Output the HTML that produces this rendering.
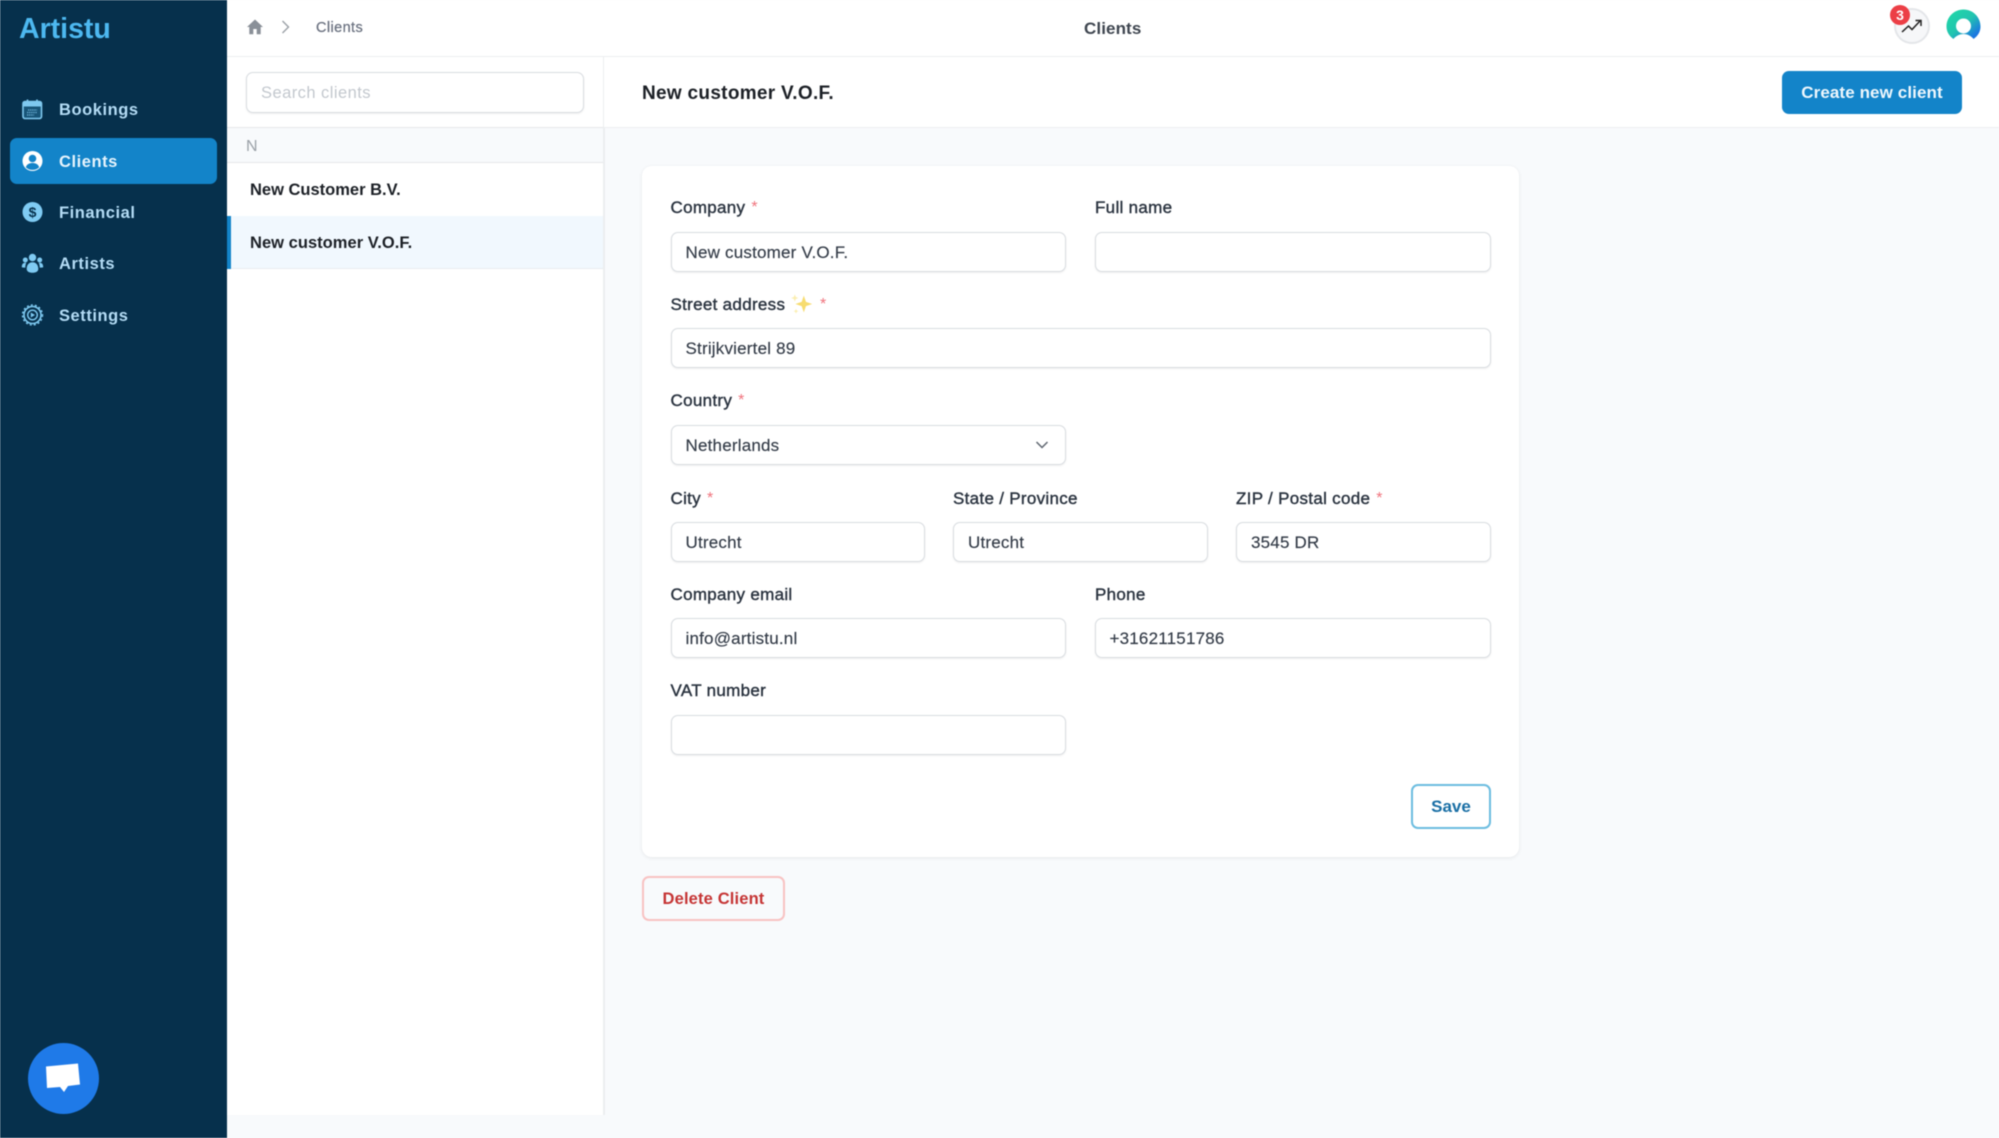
<!DOCTYPE html>
<html><head><meta charset="utf-8"><title>Clients</title>
<style>
*{box-sizing:border-box}
html,body{margin:0;padding:0;width:1999px;height:1138px;overflow:hidden;background:#f8fafc;font-family:"Liberation Sans",sans-serif;}
#root{position:relative;width:1999px;height:1138px;overflow:hidden;filter:blur(.4px)}
.a{position:absolute;white-space:nowrap}
.nav{position:absolute;left:59px;font-size:16.5px;font-weight:700;letter-spacing:.55px;color:#b4dcf5;line-height:24px}
.ic{position:absolute;left:20px;width:24px;height:24px}
.lb{position:absolute;font-size:17px;font-weight:400;color:#2b3440;line-height:22px;white-space:nowrap;letter-spacing:.3px;-webkit-text-stroke:.4px #2b3440}
.lb i{font-style:normal;color:#f0727c;margin-left:1px;font-size:16px;-webkit-text-stroke:0;position:relative;top:-1px}
.in{position:absolute;height:40px;background:#fff;border:1.5px solid #d9dde1;border-radius:7px;box-shadow:0 1px 2px rgba(0,0,0,.07);font-size:17px;color:#333b47;line-height:39px;padding-left:13.5px;letter-spacing:.2px;white-space:nowrap;-webkit-text-stroke:.15px #333b47}
</style></head>
<body><div id="root">
<!-- sidebar -->
<div class="a" style="left:0;top:0;width:226.500px;height:1138px;background:#06304c"></div>
<div class="a" style="left:19px;top:11px;font-size:28.5px;font-weight:700;color:#4db8f0;line-height:36px">Artistu</div>
<div class="a" style="left:10px;top:138px;width:207px;height:46px;background:#1384c9;border-radius:7px"></div>

<svg class="ic" style="top:97px" viewBox="0 0 24 24"><rect x="3" y="4.500" width="18.500" height="17" rx="2" fill="#175477" stroke="#7fc8ef" stroke-width="1.600"/><path d="M3 9.500h18.500V6.500a2 2 0 0 0-2-2H5a2 2 0 0 0-2 2z" fill="#7fc8ef"/><path d="M7.500 2.500v3M17 2.500v3" stroke="#7fc8ef" stroke-width="1.600"/><path d="M8 13h9M7 15.500h10M7 18h7" stroke="#6fb3da" stroke-width="1.200" stroke-dasharray="1.300 .8"/></svg>
<div class="nav" style="top:97.500px">Bookings</div>

<svg class="ic" style="top:149px" viewBox="0 0 24 24"><circle cx="12.500" cy="12" r="10" fill="#fff"/><circle cx="12.500" cy="9.500" r="3.800" fill="#1384c9"/><path d="M5.800 18.300c1-3.200 3.700-4.300 6.700-4.300s5.700 1.100 6.700 4.300c-1.700 1.800-4 2.600-6.700 2.600s-5-.8-6.700-2.600z" fill="#1384c9"/></svg>
<div class="nav" style="top:149.500px;color:#e6f4fd">Clients</div>

<svg class="ic" style="top:200px" viewBox="0 0 24 24"><circle cx="12.500" cy="12" r="10" fill="#7fcbf3"/><text x="12.500" y="17" text-anchor="middle" font-family="Liberation Sans" font-size="14" font-weight="700" fill="#06304c">$</text></svg>
<div class="nav" style="top:200.500px">Financial</div>

<svg class="ic" style="top:251px" viewBox="0 0 24 24"><circle cx="12.500" cy="6.500" r="3.700" fill="#7fcbf3"/><circle cx="5.300" cy="9" r="2.500" fill="#7fcbf3"/><circle cx="19.700" cy="9" r="2.500" fill="#7fcbf3"/><path d="M6.700 18c0-4.500 2.500-6.800 5.800-6.800s5.800 2.300 5.800 6.800c0 2.500-2.600 3.800-5.800 3.800s-5.800-1.300-5.800-3.800z" fill="#7fcbf3"/><path d="M1.800 16c0-2.500 1-4.300 3.200-4.300.5 0 .9.100 1.300.2-.7 1.300-1 2.800-1 4.700-1.500 0-3.500 0-3.500-.6zM23.200 16c0-2.500-1-4.300-3.200-4.300-.5 0-.9.100-1.300.2.700 1.300 1 2.800 1 4.700 1.500 0 3.500 0 3.500-.6z" fill="#7fcbf3"/></svg>
<div class="nav" style="top:251.500px">Artists</div>

<svg class="ic" style="top:303px" viewBox="0 0 24 24"><circle cx="12.500" cy="12" r="8.500" fill="none" stroke="#7fcbf3" stroke-width="1.600"/><circle cx="12.500" cy="12" r="10" fill="none" stroke="#7fcbf3" stroke-width="1.400" stroke-dasharray="2 2.100"/><circle cx="12.500" cy="12" r="4.800" fill="none" stroke="#7fcbf3" stroke-width="1.400"/><path d="M10.800 9.500l4.200 2.500-4.200 2.500z" fill="#7fcbf3"/></svg>
<div class="nav" style="top:303.500px">Settings</div>

<!-- chat bubble -->
<div class="a" style="left:28px;top:1043px;width:71px;height:71px;border-radius:50%;background:#1f7ae8"></div>
<svg class="a" style="left:44px;top:1062px" width="38" height="34" viewBox="0 0 38 34"><path d="M2 4.500L34 1.500 36 22.500 24 24 20 30 16 25 3 26z" fill="#fff"/></svg>

<!-- top header -->
<div class="a" style="left:226.500px;top:0;width:1772.500px;height:57px;background:#fff;border-bottom:1.500px solid #eceef0"></div>
<svg class="a" style="left:246px;top:18px" width="18" height="18" viewBox="0 0 18 18"><path d="M9 1.500L1 9h2.300v7.200h4V11h3.400v5.200h4V9H17z" fill="#8a9098"/></svg>
<svg class="a" style="left:278px;top:18px" width="14" height="18" viewBox="0 0 14 18"><path d="M4.500 3l6 6-6 6" fill="none" stroke="#9a9fa6" stroke-width="1.400"/></svg>
<div class="a" style="left:316px;top:18px;font-size:14.500px;font-weight:400;color:#6b7280;line-height:21px;letter-spacing:.4px;-webkit-text-stroke:.25px #6b7280">Clients</div>
<div class="a" style="left:1084px;top:18px;font-size:17px;font-weight:700;color:#3f4650;line-height:22px;letter-spacing:.1px">Clients</div>

<div class="a" style="left:1894px;top:8px;width:36px;height:36px;border-radius:50%;background:#f6f7f9;border:2px solid #e4e6e9"></div>
<svg class="a" style="left:1900px;top:18px" width="24" height="16" viewBox="0 0 24 16"><path d="M2 14L8.500 8l3.500 3.500L20 3" fill="none" stroke="#222" stroke-width="1.500"/><path d="M15.500 2.500H21v5.500" fill="none" stroke="#222" stroke-width="1.500"/></svg>
<div class="a" style="left:1890px;top:5px;width:20px;height:20px;border-radius:50%;background:#ec3f46;color:#fff;font-size:14px;font-weight:700;line-height:20px;text-align:center">3</div>

<svg class="a" style="left:1946px;top:9px" width="35" height="32" viewBox="0 0 35 32"><defs><linearGradient id="g" x1="0" y1="0" x2="1" y2="1"><stop offset="0" stop-color="#21dba6"/><stop offset=".5" stop-color="#22c4b0"/><stop offset=".85" stop-color="#1b78e0"/></linearGradient></defs><path d="M7.500 30C3 27 .5 22.500.5 17.500.5 8 8 .5 17.500.5S34.500 8 34.500 17.500c0 5-2.500 9.500-7 12.500-2.500-3-6-4.500-10-4.500s-7.500 1.500-10 4.500z" fill="url(#g)"/><circle cx="17.500" cy="17" r="7.500" fill="#fff"/><path d="M7.500 30c2.500-3 6-5 10-5s7.500 2 10 5v2h-20z" fill="#fff"/></svg>

<!-- list panel -->
<div class="a" style="left:226.500px;top:57px;width:376.500px;height:1058px;background:#fff"></div>
<div class="a" style="left:603px;top:57px;width:1.500px;height:1058px;background:#eceef0"></div>
<div class="in" style="left:246px;top:72px;width:338px;height:41px;color:#c3c8ce;-webkit-text-stroke:0;padding-left:14px;line-height:40px;font-size:16.500px;letter-spacing:.45px">Search clients</div>
<div class="a" style="left:226.500px;top:127px;width:376.500px;height:36px;background:#f8fafc;border-top:1.500px solid #e6e8ea;border-bottom:1.500px solid #e6e8ea"></div>
<div class="a" style="left:246px;top:136px;font-size:16px;color:#9ba1a8;line-height:21px">N</div>
<div class="a" style="left:250px;top:179px;font-size:16.500px;font-weight:700;color:#1c2026;line-height:23px">New Customer B.V.</div>
<div class="a" style="left:226.500px;top:216px;width:376.500px;height:53px;background:#f1f8fe;border-bottom:1.500px solid #e9ecef"></div>
<div class="a" style="left:226.500px;top:216px;width:4px;height:53px;background:#1384c9"></div>
<div class="a" style="left:250px;top:232px;font-size:16.500px;font-weight:700;color:#1c2026;line-height:23px;letter-spacing:.03px">New customer V.O.F.</div>

<!-- main header -->
<div class="a" style="left:604px;top:57px;width:1395px;height:71px;background:#fff;border-bottom:1.500px solid #eceef0"></div>
<div class="a" style="left:642px;top:81px;font-size:19px;font-weight:700;color:#1c2026;line-height:25px;letter-spacing:.3px">New customer V.O.F.</div>
<div class="a" style="left:1782px;top:71px;width:180px;height:43px;background:#1384c9;border-radius:7px;color:#eef7fd;font-size:17px;font-weight:700;line-height:43px;text-align:center;letter-spacing:.1px">Create new client</div>

<!-- card -->
<div class="a" style="left:642px;top:166px;width:877px;height:691px;background:#fff;border-radius:10px;box-shadow:0 1px 4px rgba(0,0,0,.08)"></div>

<div class="lb" style="left:670.500px;top:197px">Company <i>*</i></div>
<div class="in" style="left:671px;top:232px;width:395px">New customer V.O.F.</div>
<div class="lb" style="left:1095px;top:197px">Full name</div>
<div class="in" style="left:1095px;top:232px;width:396px"></div>

<div class="lb" style="left:670.500px;top:293.500px">Street address</div>
<svg class="a" style="left:790px;top:292px" width="24" height="24" viewBox="0 0 20 20"><path d="M11.500 3l1.800 5.200L18.500 10l-5.200 1.800L11.500 17l-1.800-5.200L4.500 10l5.200-1.800z" fill="#f7dc6f"/><path d="M4 2l.8 2.200L7 5l-2.200.8L4 8l-.8-2.200L1 5l2.200-.8z" fill="#fbeeb0"/><path d="M5 14l.6 1.400L7 16l-1.400.6L5 18l-.6-1.400L3 16l1.400-.6z" fill="#fbeeb0"/></svg>
<div class="lb" style="left:820px;top:293.500px"><i style="margin:0">*</i></div>
<div class="in" style="left:671px;top:328px;width:820px">Strijkviertel 89</div>

<div class="lb" style="left:670.500px;top:390px">Country <i>*</i></div>
<div class="in" style="left:671px;top:425px;width:395px">Netherlands</div>
<svg class="a" style="left:1034px;top:438px" width="16" height="14" viewBox="0 0 16 14"><path d="M2.500 4l5.500 5.500L13.500 4" fill="none" stroke="#5f6670" stroke-width="1.500"/></svg>

<div class="lb" style="left:670.500px;top:487.500px">City <i>*</i></div>
<div class="in" style="left:671px;top:521.500px;width:254px">Utrecht</div>
<div class="lb" style="left:953px;top:487.500px">State / Province</div>
<div class="in" style="left:953px;top:521.500px;width:255px;padding-left:14px">Utrecht</div>
<div class="lb" style="left:1236px;top:487.500px">ZIP / Postal code <i>*</i></div>
<div class="in" style="left:1236px;top:521.500px;width:255px;padding-left:14px">3545 DR</div>

<div class="lb" style="left:670.500px;top:583.500px">Company email</div>
<div class="in" style="left:671px;top:618px;width:395px">info@artistu.nl</div>
<div class="lb" style="left:1095px;top:583.500px">Phone</div>
<div class="in" style="left:1095px;top:618px;width:396px">+31621151786</div>

<div class="lb" style="left:670.500px;top:680px">VAT number</div>
<div class="in" style="left:671px;top:715px;width:395px"></div>

<div class="a" style="left:1411px;top:784px;width:80px;height:45px;background:#fff;border:2px solid #6cbde0;border-radius:7px;color:#1a6fa5;font-size:17px;font-weight:700;line-height:41px;text-align:center">Save</div>
<div class="a" style="left:642px;top:876px;width:143px;height:45px;border:2px solid #f8c2c2;border-radius:7px;color:#c53434;font-size:16.500px;font-weight:700;line-height:43px;text-align:center;letter-spacing:.15px">Delete Client</div>
</div></body></html>
